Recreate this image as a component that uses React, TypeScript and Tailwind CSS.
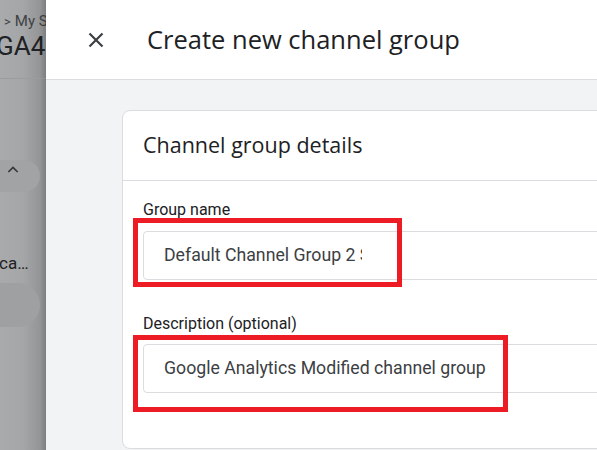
import React from "react";

export default function App() {
  return (
    <div className="w-[597px] h-[450px] flex overflow-hidden bg-white" style={{ fontFamily: "Roboto, 'Liberation Sans', sans-serif" }}>
      {/* dimmed background page */}
      <div className="w-[46px] shrink-0 relative bg-gradient-to-r from-[#a9aaab] via-[#a5a6a7] to-[#8e8f90] overflow-hidden">
        <div className="h-[79px] border-b border-[#9b9c9d] relative">
          <div className="absolute left-[4px] top-[10px] flex items-center text-[15px] text-[#3e4145] whitespace-nowrap">
            <span className="text-[13px] mr-[4px]">&gt;</span>
            <span>My S</span>
          </div>
          <div className="absolute left-[-4px] top-[31px] text-[26px] leading-[30px] text-[#202124] whitespace-nowrap">GA4 ▾</div>
        </div>
        <div className="absolute left-[-20px] top-[160px] w-[60px] h-[32px] rounded-full bg-[#a2a3a4]" />
        <svg width="16" height="16" viewBox="0 0 24 24" className="absolute left-[5px] top-[162px]">
          <path d="M5 15l7-7 7 7" fill="none" stroke="#33373c" strokeWidth="2.5" />
        </svg>
        <div className="absolute left-[-1px] top-[251px] text-[17px] text-[#202124] whitespace-nowrap">ca…</div>
        <div className="absolute left-[-20px] top-[283px] w-[60px] h-[44px] rounded-full bg-[#9fa0a1]" />
      </div>

      {/* side panel */}
      <div className="flex-1 flex flex-col min-w-0 relative">
        <div className="h-[80px] shrink-0 bg-white border-b border-[#dadce0] flex items-center">
          <svg width="24" height="24" viewBox="0 0 24 24" className="ml-[38px]">
            <path d="M5.5 5.5l13 13M18.5 5.5l-13 13" stroke="#3c4043" strokeWidth="2.2" fill="none" />
          </svg>
          <div className="ml-[39px] text-[25.5px] text-[#202124] whitespace-nowrap" style={{ fontFamily: "'Open Sans', Roboto, sans-serif" }}>
            Create new channel group
          </div>
        </div>
        <div className="flex-1 bg-[#f1f3f4] pl-[76px] pt-[30px]">
          <div className="w-[560px] bg-white border border-[#dadce0] rounded-[8px]">
            <div className="h-[70px] border-b border-[#dadce0] flex items-center pl-[20px]">
              <span className="text-[21.5px] text-[#202124] whitespace-nowrap" style={{ fontFamily: "'Open Sans', Roboto, sans-serif" }}>
                Channel group details
              </span>
            </div>
            <div className="px-[20px] pt-[20px] pb-[55px]">
              <div className="text-[16px] leading-[18px] text-[#202124]">Group name</div>
              <div className="relative mt-[12px]">
                <div className="h-[49px] border border-[#dadce0] rounded-[4px] flex items-center pl-[20px]">
                  <span className="w-[198px] overflow-hidden whitespace-nowrap text-[17.7px] text-[#3c4043]">Default Channel Group 2 S</span>
                </div>
                <div className="absolute left-[-10px] top-[-13px] w-[269px] h-[69px] border-[5px] border-[#ed1c24]" />
              </div>
              <div className="text-[16px] leading-[18px] text-[#202124] mt-[35px]">Description (optional)</div>
              <div className="relative mt-[11px]">
                <div className="h-[49px] border border-[#dadce0] rounded-[4px] flex items-center pl-[20px]">
                  <span className="whitespace-nowrap text-[17.7px] text-[#3c4043]">Google Analytics Modified channel group</span>
                </div>
                <div className="absolute left-[-10px] top-[-9px] w-[375px] h-[77px] border-[5px] border-[#ed1c24]" />
              </div>
            </div>
          </div>
        </div>
        <div className="absolute left-0 top-0 bottom-0 w-[6px] -translate-x-full bg-gradient-to-r from-transparent to-[rgba(0,0,0,0.12)] pointer-events-none" />
      </div>
    </div>
  );
}
